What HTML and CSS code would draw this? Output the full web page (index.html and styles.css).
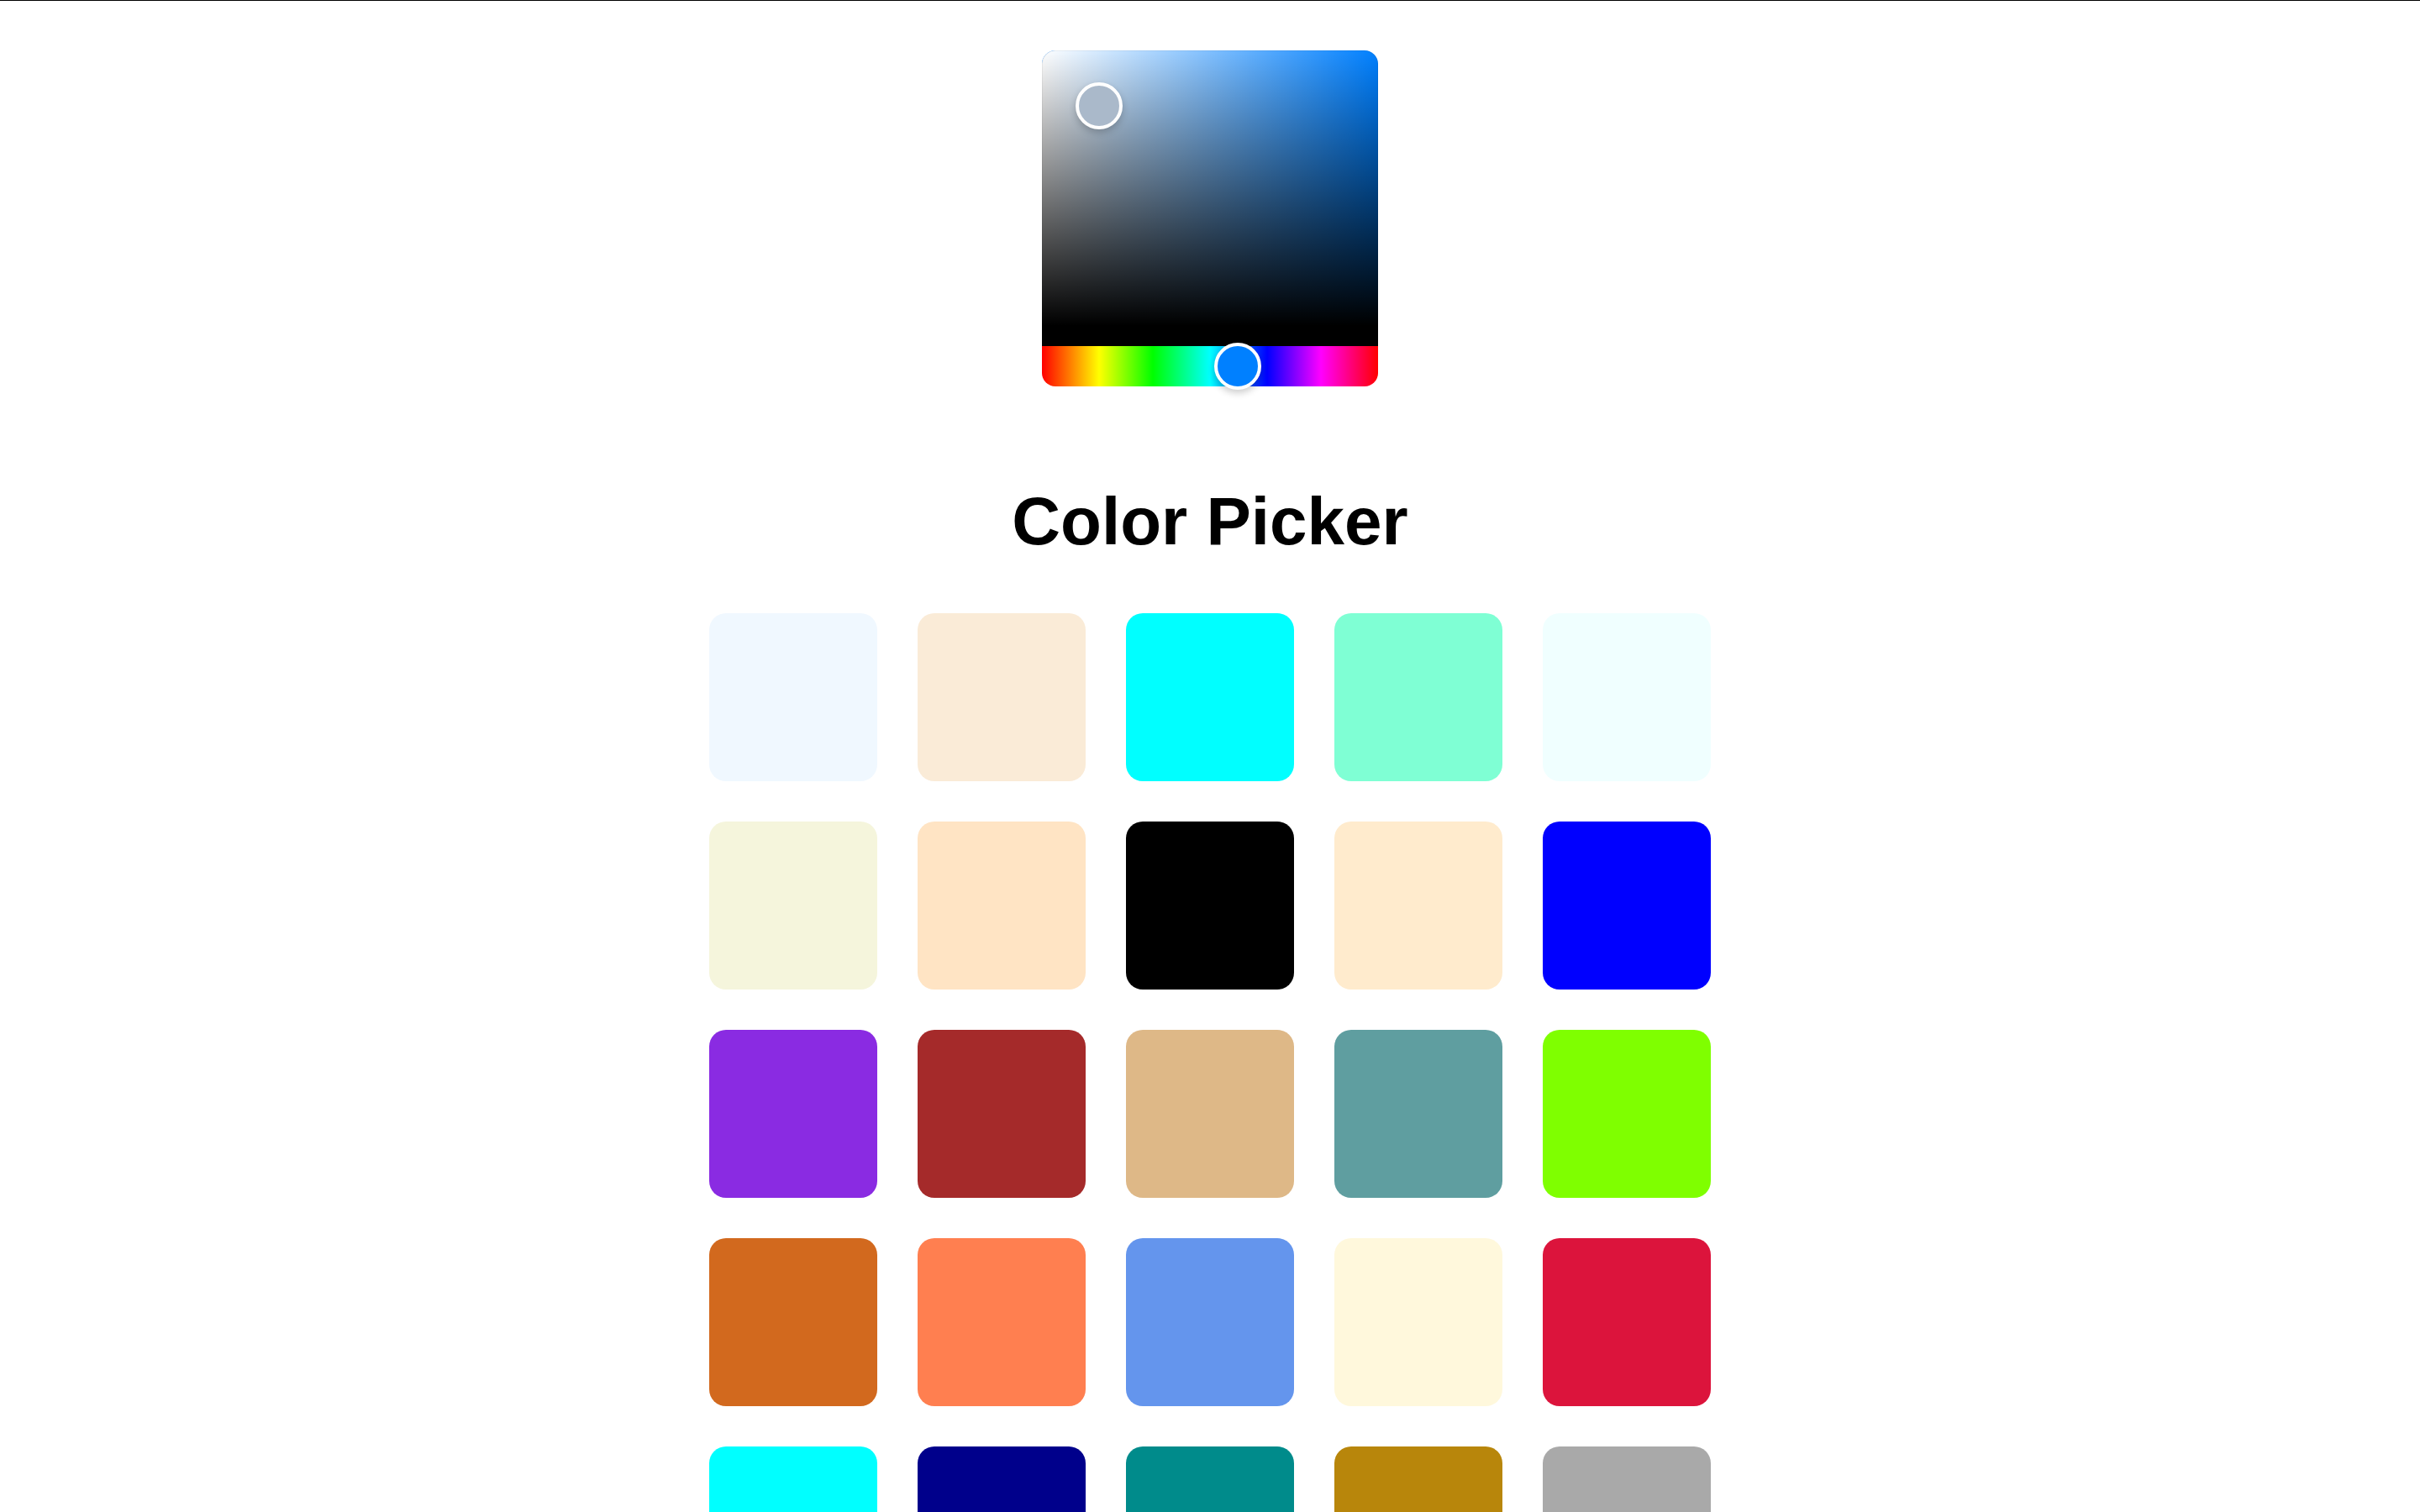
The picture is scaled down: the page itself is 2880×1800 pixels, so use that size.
FILE: index.html
```html
<!DOCTYPE html>
<html lang="en">
<head>
<meta charset="utf-8">
<title>Color Picker</title>
<link rel="stylesheet" href="styles.css">
</head>
<body>
<div class="topline"></div>
<main class="app">
  <div class="picker">
    <div class="saturation">
      <div class="pointer sat-pointer" style="left: 17%; top: 20%;"></div>
    </div>
    <div class="hue">
      <div class="pointer hue-pointer" style="left: 58.2%;"></div>
    </div>
  </div>
  <h1 class="title">Color Picker</h1>
  <div class="swatches">
    <div class="swatch" style="background: aliceblue;"></div>
    <div class="swatch" style="background: antiquewhite;"></div>
    <div class="swatch" style="background: aqua;"></div>
    <div class="swatch" style="background: aquamarine;"></div>
    <div class="swatch" style="background: azure;"></div>
    <div class="swatch" style="background: beige;"></div>
    <div class="swatch" style="background: bisque;"></div>
    <div class="swatch" style="background: black;"></div>
    <div class="swatch" style="background: blanchedalmond;"></div>
    <div class="swatch" style="background: blue;"></div>
    <div class="swatch" style="background: blueviolet;"></div>
    <div class="swatch" style="background: brown;"></div>
    <div class="swatch" style="background: burlywood;"></div>
    <div class="swatch" style="background: cadetblue;"></div>
    <div class="swatch" style="background: chartreuse;"></div>
    <div class="swatch" style="background: chocolate;"></div>
    <div class="swatch" style="background: coral;"></div>
    <div class="swatch" style="background: cornflowerblue;"></div>
    <div class="swatch" style="background: cornsilk;"></div>
    <div class="swatch" style="background: crimson;"></div>
    <div class="swatch" style="background: cyan;"></div>
    <div class="swatch" style="background: darkblue;"></div>
    <div class="swatch" style="background: darkcyan;"></div>
    <div class="swatch" style="background: darkgoldenrod;"></div>
    <div class="swatch" style="background: darkgray;"></div>
    <div class="swatch" style="background: darkgreen;"></div>
    <div class="swatch" style="background: darkkhaki;"></div>
    <div class="swatch" style="background: darkmagenta;"></div>
    <div class="swatch" style="background: darkolivegreen;"></div>
    <div class="swatch" style="background: darkorange;"></div>
  </div>
</main>
</body>
</html>
```

FILE: styles.css
```css
html, body {
  margin: 0;
  padding: 0;
  background: #ffffff;
}

body {
  font-family: "Liberation Sans", Arial, Helvetica, sans-serif;
  color: #000;
}

.topline {
  height: 1px;
  background: #000;
}

.app {
  display: flex;
  flex-direction: column;
  align-items: center;
  padding-top: 59px;
}

.picker {
  position: relative;
  width: 400px;
  height: 400px;
  display: flex;
  flex-direction: column;
}

.saturation {
  position: relative;
  flex-grow: 1;
  border-bottom: 24px solid #000;
  border-radius: 16px 16px 0 0;
  background-color: #0080ff;
  background-image:
    linear-gradient(to top, #000, rgba(0, 0, 0, 0)),
    linear-gradient(to right, #fff, rgba(255, 255, 255, 0));
  box-shadow: inset 0 0 0 1px rgba(0, 0, 0, 0.05);
}

.hue {
  position: relative;
  flex: 0 0 48px;
  border-radius: 0 0 16px 16px;
  background: linear-gradient(to right, #f00 0, #ff0 17%, #0f0 33%, #0ff 50%, #00f 67%, #f0f 83%, #f00 100%);
}

.pointer {
  position: absolute;
  z-index: 1;
  box-sizing: border-box;
  width: 56px;
  height: 56px;
  transform: translate(-50%, -50%);
  border: 4px solid #fff;
  border-radius: 50%;
  box-shadow: 0 4px 8px rgba(0, 0, 0, 0.2);
}

.sat-pointer {
  background: #aab9ca;
}

.hue-pointer {
  top: 50%;
  background: #0080ff;
  z-index: 2;
}

.title {
  margin: 115px 0 63px;
  font-size: 80px;
  font-weight: 700;
  line-height: normal;
}

.swatches {
  display: grid;
  grid-template-columns: repeat(5, 200px);
  gap: 48px;
  padding-bottom: 60px;
}

.swatch {
  width: 200px;
  height: 200px;
  border-radius: 20px;
}
```
